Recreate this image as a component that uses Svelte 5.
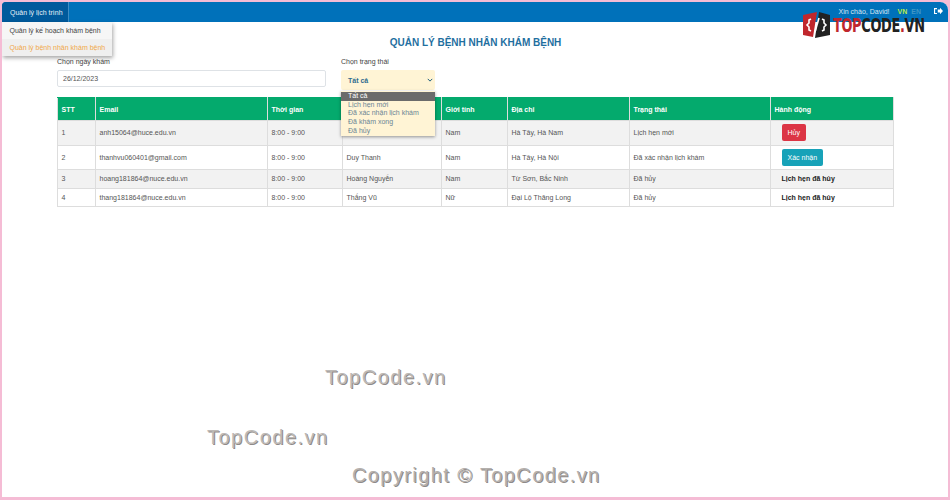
<script lang="ts">
	const columns = ['STT', 'Email', 'Thời gian', '', 'Giới tính', 'Địa chỉ', 'Trạng thái', 'Hành động'];

	const rows = [
		{ email: 'anh15064@huce.edu.vn', name: '', gender: 'Nam', address: 'Hà Tây, Hà Nam', status: 'Lịch hẹn mới', action: 'cancel' },
		{ email: 'thanhvu060401@gmail.com', name: 'Duy Thanh', gender: 'Nam', address: 'Hà Tây, Hà Nội', status: 'Đã xác nhận lịch khám', action: 'confirm' },
		{ email: 'hoang181864@nuce.edu.vn', name: 'Hoàng Nguyễn', gender: 'Nam', address: 'Từ Sơn, Bắc Ninh', status: 'Đã hủy', action: 'none' },
		{ email: 'thang181864@nuce.edu.vn', name: 'Thắng Vũ', gender: 'Nữ', address: 'Đại Lộ Thăng Long', status: 'Đã hủy', action: 'none' }
	];

	const statusOptions = ['Tất cả', 'Lịch hẹn mới', 'Đã xác nhận lịch khám', 'Đã khám xong', 'Đã hủy'];
</script>

<div class="page">
	<header class="topbar">
		<div class="menu-item">
			Quản lý lịch trình
			<div class="submenu">
				<div class="submenu-item">Quản lý kế hoạch khám bệnh</div>
				<div class="submenu-item active">Quản lý bệnh nhân khám bệnh</div>
			</div>
		</div>
		<div class="topbar-right">
			<span>Xin chào, David!</span>
			<span class="lang on">VN</span>
			<span class="lang">EN</span>
			<svg class="logout" viewBox="0 0 12 10" width="9" height="8">
				<path d="M0 1h4v1.5H1.5v5H4V9H0zM5 3h3V.8L12 5 8 9.2V7H5z" fill="#fff" />
			</svg>
		</div>
	</header>

	<main class="content">
		<h1>QUẢN LÝ BỆNH NHÂN KHÁM BỆNH</h1>

		<div class="filters">
			<div class="field date-field">
				<span class="label">Chọn ngày khám</span>
				<div class="date-input">26/12/2023</div>
			</div>
			<div class="field status-field">
				<span class="label">Chọn trạng thái</span>
				<div class="select">
					Tất cả
					<svg viewBox="0 0 8 5" width="6" height="4">
						<path d="M1 1l3 3 3-3" fill="none" stroke="#1b5a7a" stroke-width="1.3" />
					</svg>
				</div>
				<ul class="options">
					{#each statusOptions as option, i}
						<li class:current={i === 0}>{option}</li>
					{/each}
				</ul>
			</div>
		</div>

		<table>
			<thead>
				<tr>
					{#each columns as col}
						<th>{col}</th>
					{/each}
				</tr>
			</thead>
			<tbody>
				{#each rows as row, i}
					<tr class:tall={row.action !== 'none'}>
						<td>{i + 1}</td>
						<td>{row.email}</td>
						<td>8:00 - 9:00</td>
						<td>{row.name}</td>
						<td>{row.gender}</td>
						<td>{row.address}</td>
						<td>{row.status}</td>
						<td class="action">
							{#if row.action === 'cancel'}
								<button class="btn danger" type="button">Hủy</button>
							{:else if row.action === 'confirm'}
								<button class="btn info" type="button">Xác nhận</button>
							{:else}
								<strong>Lịch hẹn đã hủy</strong>
							{/if}
						</td>
					</tr>
				{/each}
			</tbody>
		</table>
	</main>

	<!-- logo and watermarks sit over the screenshot -->
	<div class="logo">
		<svg viewBox="0 0 27 26" width="27" height="26">
			<path d="M0 3 14 0 10 25 0 23z" fill="#c0272d" />
			<path d="M16 0 27 3v20l-15 3z" fill="#222" />
			<path d="M8 7 6 8v3l-2 2 2 2v3l2 1" fill="none" stroke="#fff" stroke-width="1.6" />
			<path d="M19 7l2 1v3l2 2-2 2v3l-2 1" fill="none" stroke="#fff" stroke-width="1.6" />
			<path d="M16 6 12 20" stroke="#fff" stroke-width="1.6" />
		</svg>
		<span class="logo-text"><b>TOP</b>CODE<b>.</b>VN</span>
	</div>
	<span class="mark mark-a">TopCode.vn</span>
	<span class="mark mark-b">TopCode.vn</span>
	<span class="mark mark-c">Copyright © TopCode.vn</span>
</div>

<style>
	:global(body) {
		margin: 0;
		background: #f5bcd5;
	}

	.page {
		position: relative;
		box-sizing: border-box;
		width: 946px;
		height: 495px;
		margin: 2px 2px 3px 2px;
		background: #fff;
		border-radius: 4px 8px 0 0;
		font-family: 'Liberation Sans', Arial, sans-serif;
		font-size: 7px;
		color: #555;
		overflow: hidden;
	}

	.topbar {
		display: flex;
		justify-content: space-between;
		align-items: center;
		height: 20px;
		background: #0071ba;
		color: #fff;
	}

	.menu-item {
		position: relative;
		display: flex;
		align-items: center;
		height: 20px;
		padding: 0 5px 0 8px;
		background: #005a9c;
		border-right: 1px solid #3d8cc4;
		font-size: 7px;
		color: #e6f0f7;
	}

	.submenu {
		position: absolute;
		top: 20px;
		left: 0;
		z-index: 3;
		width: 110px;
		background: #f6f6f6;
		box-shadow: 1px 2px 4px rgba(0, 0, 0, 0.35);
		color: #444;
	}

	.submenu-item {
		height: 17px;
		line-height: 17px;
		padding-left: 7.5px;
		font-size: 7px;
		white-space: nowrap;
	}

	.submenu-item.active {
		background: #efefef;
		color: #f0a84a;
	}

	.topbar-right {
		display: flex;
		align-items: center;
		gap: 4px;
		margin-top: -2px;
		padding-right: 5px;
		font-size: 7px;
		color: #d8e8f3;
	}

	.lang {
		font-weight: 700;
		color: #3f96c4;
	}

	.lang.on {
		margin-left: 4px;
		color: #b6ea4a;
	}

	.logout {
		margin-left: 9px;
	}

	.content {
		padding: 0 54px 0 55px;
	}

	h1 {
		margin: 15px 0 0;
		font-size: 10px;
		line-height: 12px;
		font-weight: 700;
		text-align: center;
		color: #1f6f9f;
	}

	.filters {
		display: flex;
		gap: 15px;
		margin-top: 8px;
	}

	.field {
		display: flex;
		flex-direction: column;
		position: relative;
	}

	.label {
		line-height: 9px;
		font-size: 7px;
		color: #444;
	}

	.date-field {
		width: 269px;
	}

	.date-input {
		box-sizing: border-box;
		height: 17px;
		margin-top: 4px;
		padding-left: 5px;
		line-height: 15px;
		border: 1px solid #dee2e6;
		border-radius: 2px;
		color: #555;
	}

	.status-field {
		width: 94px;
	}

	.select {
		display: flex;
		justify-content: space-between;
		align-items: center;
		box-sizing: border-box;
		height: 20px;
		margin-top: 4px;
		padding: 0 2px 0 7px;
		background: #fff4d5;
		border-radius: 2px;
		font-weight: 700;
		color: #2f6c8f;
	}

	.options {
		position: absolute;
		top: 34px;
		left: 0;
		z-index: 2;
		width: 94px;
		margin: 0;
		padding: 1px 0;
		list-style: none;
		background: #fff4d5;
		box-shadow: 0 1px 3px rgba(0, 0, 0, 0.4);
		font-size: 7px;
		color: #6b8596;
	}

	.options li {
		height: 8.7px;
		line-height: 8.7px;
		padding-left: 7px;
	}

	.options li.current {
		background: #6b6b6b;
		color: #fff;
	}

	table {
		width: 837px;
		margin-top: 7px;
		border-collapse: collapse;
		table-layout: fixed;
	}

	th {
		box-sizing: border-box;
		height: 23px;
		padding: 0 0 0 3.5px;
		background: #04aa6d;
		border: 1px solid #ddd;
		border-top-color: #04aa6d;
		text-align: left;
		font-size: 7px;
		font-weight: 700;
		color: #fff;
	}

	th:nth-child(1) { width: 38px; }
	th:nth-child(2) { width: 172px; }
	th:nth-child(3) { width: 75px; }
	th:nth-child(4) { width: 99px; }
	th:nth-child(5) { width: 66px; }
	th:nth-child(6) { width: 122px; }
	th:nth-child(7) { width: 141px; }

	td {
		height: 17.5px;
		padding: 0 0 0 3.5px;
		border: 1px solid #ddd;
		font-size: 7px;
		color: #555;
	}

	tbody tr:nth-child(odd) {
		background: #f2f2f2;
	}

	tr.tall td {
		height: 23.5px;
	}

	td.action {
		padding-left: 10.5px;
	}

	.action strong {
		color: #222;
	}

	.btn {
		display: block;
		height: 17px;
		padding: 0 6px;
		border: none;
		border-radius: 2px;
		font-family: inherit;
		font-size: 7px;
		color: #fff;
	}

	.btn.danger {
		background: #dc3545;
	}

	.btn.info {
		background: #17a2b8;
	}

	.logo {
		position: absolute;
		top: 10px;
		left: 801px;
		z-index: 4;
		display: flex;
		align-items: center;
		gap: 3px;
	}

	.logo-text {
		font-family: 'DejaVu Sans', sans-serif;
		font-size: 19px;
		font-weight: 700;
		letter-spacing: -0.5px;
		color: #222;
		transform: scaleX(0.68);
		transform-origin: left center;
	}

	.logo-text b {
		color: #c0272d;
	}

	.mark {
		position: absolute;
		z-index: 4;
		font-family: 'Liberation Sans', Arial, sans-serif;
		font-size: 20px;
		letter-spacing: 1.5px;
		white-space: nowrap;
		color: #bdb9b6;
		text-shadow: 1px 1px 0 #8f8a88;
	}

	.mark-a { top: 364px; left: 323px; }
	.mark-b { top: 424px; left: 205px; }
	.mark-c { top: 462px; left: 350px; color: #b4b0ad; letter-spacing: 1.4px; }
</style>
